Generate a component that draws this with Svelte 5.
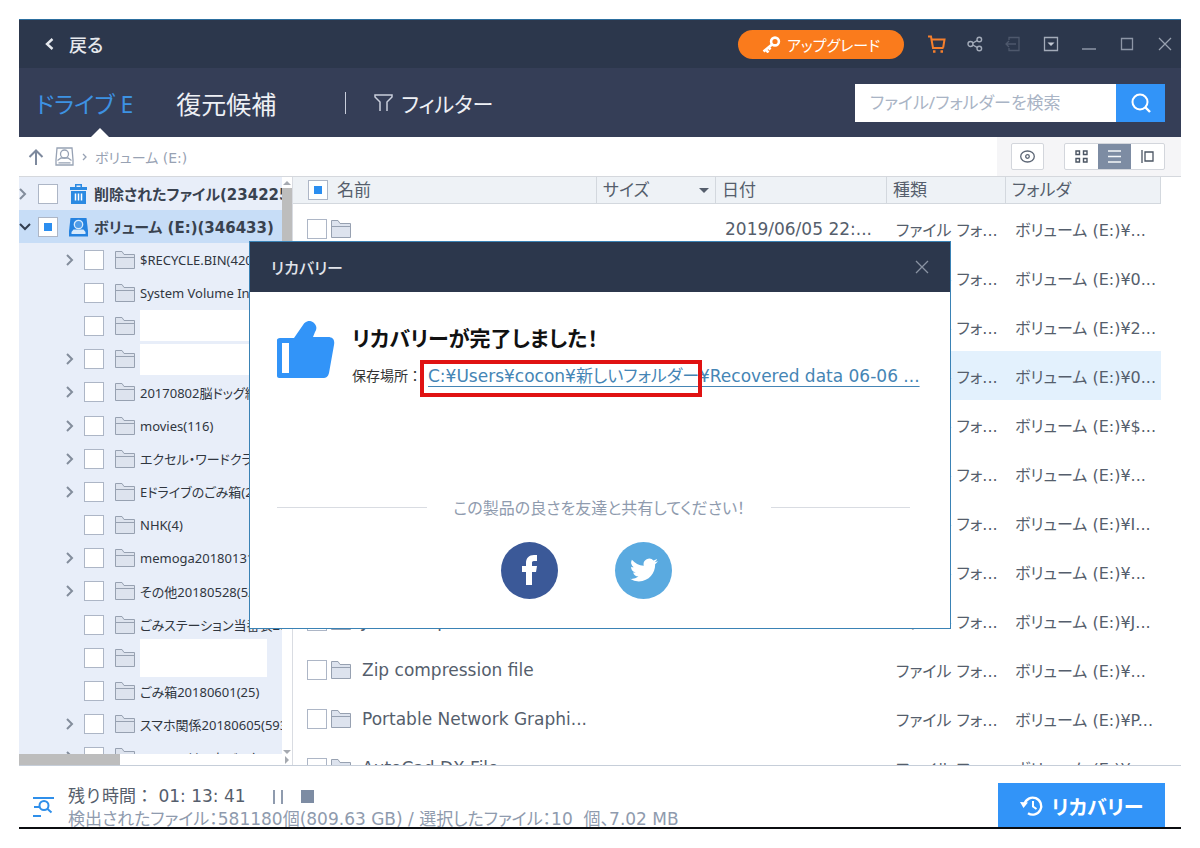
<script>
  const tree = [
    { name: "$RECYCLE.BIN(4206)", open: true },
    { name: "System Volume Information", open: false },
    { name: "", open: false, blank: "wide" },
    { name: "", open: true, blank: "wide" },
    { name: "20170802脳ドッグ結果(12)", open: true },
    { name: "movies(116)", open: true },
    { name: "エクセル・ワードクラシック", open: true },
    { name: "Eドライブのごみ箱(2018)", open: true },
    { name: "NHK(4)", open: false },
    { name: "memoga20180131(8)", open: true },
    { name: "その他20180528(520)", open: true },
    { name: "ごみステーション当番表2018", open: false },
    { name: "", open: false, blank: "tall" },
    { name: "ごみ箱20180601(25)", open: false },
    { name: "スマホ関係20180605(593)", open: true },
    { name: "Hatena はてなバックアップ", open: true },
  ];

  const rows = [
    { name: "", date: "2019/06/05 22:...", folder: "..." },
    { name: "", folder: "0..." },
    { name: "", folder: "2..." },
    { name: "", folder: "0...", active: true },
    { name: "", folder: "$..." },
    { name: "", folder: "..." },
    { name: "", folder: "I..." },
    { name: "", folder: "..." },
    { name: "JPEG Graphics", folder: "J..." },
    { name: "Zip compression file", folder: "..." },
    { name: "Portable Network Graphi...", folder: "P..." },
    { name: "AutoCad DX File", folder: "..." },
  ];

  let keyword = $state("");
  let showDialog = $state(true);
  let volumePartial = $state(true);
  let listPartial = $state(true);

  const closeDialog = () => {
    showDialog = false;
  };
</script>

{#snippet folderIcon()}
  <svg class="folder" width="20" height="20" viewBox="0 0 20 20" fill="#dde3ee" stroke="#97a1b1">
    <path d="M.5 18.500V1.500h6.500l2 3h10.500v14z" />
    <path d="M.5 7.500h19" />
  </svg>
{/snippet}

{#snippet chevron()}
  <svg width="8" height="12" viewBox="0 0 8 12" fill="none" stroke="#838d9c" stroke-width="2">
    <path d="M1 1l5 5-5 5" />
  </svg>
{/snippet}

<div class="window">
  <header class="titlebar">
    <button class="back">
      <svg width="9" height="12" viewBox="0 0 9 12" fill="none" stroke="#e6e9ee" stroke-width="2.4">
        <path d="M7.500 1L2 6l5.500 5" />
      </svg>
      戻る
    </button>
    <div class="tools">
      <button class="upgrade">
        <svg width="19" height="17" viewBox="0 0 19 17" fill="none" stroke="#fff" stroke-width="2.600">
          <circle cx="13" cy="5.500" r="3.900" />
          <path d="M10.300 8.300L1.500 15.500M3.500 13.500l3 3M6.500 11.500l2 2" />
        </svg>
        アップグレード
      </button>
      <button class="tool" aria-label="購入">
        <svg width="18" height="18" viewBox="0 0 18 18" fill="none" stroke="#f57f2c" stroke-width="2">
          <path d="M0 1.500h3l2 11.500h10.500M4 4.500h12.500l-1.300 8" />
          <path d="M5 16.500h2.500M12.500 16.500H15" stroke-width="2.400" />
        </svg>
      </button>
      <button class="tool" aria-label="共有">
        <svg width="16" height="16" viewBox="0 0 16 16" fill="none" stroke="#a3abb9" stroke-width="1.400">
          <circle cx="3.500" cy="8" r="2.500" />
          <circle cx="12.300" cy="3.500" r="2.300" />
          <circle cx="12.300" cy="12.500" r="2.300" />
          <path d="M5.800 7l4.300-2.300M5.800 9l4.300 2.300" />
        </svg>
      </button>
      <button class="tool" aria-label="ログアウト">
        <svg width="16" height="16" viewBox="0 0 16 16" fill="none" stroke="#4e586c" stroke-width="1.300">
          <path d="M4 4V1.500h10v13H4V12M11 8H1M4 5L1 8l3 3" />
        </svg>
      </button>
      <button class="tool" aria-label="メニュー">
        <svg width="16" height="16" viewBox="0 0 16 16" fill="none" stroke="#a3abb9" stroke-width="1.300">
          <path d="M1.500 1.500h13v13h-13z" />
          <path d="M4.500 6.500h7L8 10z" fill="#c3c9d3" stroke="none" />
        </svg>
      </button>
      <button class="tool" aria-label="最小化">
        <svg width="14" height="14" viewBox="0 0 14 14" stroke="#8d96a6" stroke-width="1.500">
          <path d="M0 12h14" />
        </svg>
      </button>
      <button class="tool" aria-label="最大化">
        <svg width="14" height="14" viewBox="0 0 14 14" fill="none" stroke="#8d96a6" stroke-width="1.300">
          <path d="M1.500 1.500h11v11h-11z" />
        </svg>
      </button>
      <button class="tool" aria-label="閉じる">
        <svg width="14" height="14" viewBox="0 0 14 14" stroke="#98a1af" stroke-width="1.300">
          <path d="M1 1l12 12M13 1L1 13" />
        </svg>
      </button>
    </div>
  </header>

  <nav class="navbar">
    <button class="tab active">ドライブ E</button>
    <button class="tab">復元候補</button>
    <span class="divider"></span>
    <button class="tab filter">
      <svg width="19" height="18" viewBox="0 0 19 18" fill="none" stroke="#c9cedb" stroke-width="1.500">
        <path d="M6 17V8L1 3V1h17v2l-5 5v9" />
      </svg>
      フィルター
    </button>
    <form class="search" onsubmit={(e) => e.preventDefault()}>
      <input type="text" aria-label="検索" placeholder="ファイル/フォルダーを検索" bind:value={keyword} />
      <button aria-label="検索する">
        <svg width="22" height="22" viewBox="0 0 22 22" fill="none" stroke="#fff" stroke-width="2">
          <circle cx="10" cy="10" r="7.500" />
          <path d="M15.500 15.500l4.500 4.500" stroke-width="2.400" />
        </svg>
      </button>
    </form>
  </nav>

  <div class="pathbar">
    <div class="crumbs">
      <button aria-label="上へ">
        <svg width="16" height="16" viewBox="0 0 16 16" fill="none" stroke="#7d899d" stroke-width="2">
          <path d="M8 16V1.500M1.500 8L8 1.500 14.500 8" />
        </svg>
      </button>
      <svg class="drive" width="19" height="19" viewBox="0 0 19 19" fill="none" stroke="#97a2b4" stroke-width="1.300">
        <path d="M2 1h15l1 12v5H1v-5z" />
        <circle cx="9.500" cy="7" r="4" />
        <path d="M2.500 13.500L6 11h7l3.500 2.500M3.500 15.800h12" />
      </svg>
      <svg width="6" height="8" viewBox="0 0 6 8" fill="none" stroke="#97a2b4" stroke-width="1.300">
        <path d="M1 1l3 3-3 3" />
      </svg>
      <a href="#volume">ボリューム (E:)</a>
    </div>
    <div class="views">
      <button class="preview" aria-label="プレビュー">
        <svg width="15" height="13" viewBox="0 0 15 13" fill="none" stroke="#5c6675" stroke-width="1.300">
          <ellipse cx="7.500" cy="6.500" rx="6.800" ry="5.500" />
          <circle cx="7.500" cy="6.500" r="1.800" />
        </svg>
      </button>
      <div class="group">
        <button aria-label="アイコン表示">
          <svg width="13" height="13" viewBox="0 0 13 13" fill="none" stroke="#4b5563" stroke-width="1.400">
            <path d="M1 1h3.500v3.500H1zM8.500 1H12v3.500H8.500zM1 8.500h3.500V12H1zM8.500 8.500H12V12H8.500z" />
          </svg>
        </button>
        <button class="on" aria-label="詳細表示">
          <svg width="13" height="13" viewBox="0 0 13 13" stroke="#f4f6f9" stroke-width="1.300">
            <path d="M0 1h13M0 6.500h13M0 12h13" />
          </svg>
        </button>
        <button aria-label="プレビュー表示">
          <svg width="13" height="13" viewBox="0 0 13 13" fill="none" stroke="#4b5563" stroke-width="1.300">
            <path d="M1 0v13M4 2h8v9H4z" />
          </svg>
        </button>
      </div>
    </div>
  </div>

  <main class="panes">
    <aside class="sidebar">
      <div class="scroller">
        <div class="content">
          <label class="root">
            <span class="toggle">{@render chevron()}</span>
            <input type="checkbox" />
            <svg class="icon" width="19" height="20" viewBox="0 0 19 20" fill="#2b8ae2">
              <path d="M1 3h5V0h7v3h5v3H1zM2 7h15v13H2z" />
              <path d="M6.500 9.500v7M9.500 9.500v7M12.500 9.500v7" stroke="#fff" stroke-width="1.500" />
              <path d="M7.500 1.500h4V3h-4z" fill="#e8eefa" />
            </svg>
            <span class="name">削除されたファイル(2342258)</span>
          </label>
          <label class="root selected">
            <span class="toggle">
              <svg width="12" height="8" viewBox="0 0 12 8" fill="none" stroke="#333e50" stroke-width="2">
                <path d="M1 1l5 5 5-5" />
              </svg>
            </span>
            <input type="checkbox" bind:indeterminate={volumePartial} />
            <svg class="icon" width="19" height="20" viewBox="0 0 19 20" fill="#2683e0">
              <path d="M1.500 1h16l1.500 13v5.500H0V14z" />
              <circle cx="9.500" cy="7.500" r="4.200" fill="#4f9ce8" stroke="#d8eafc" stroke-width="1.300" />
              <path d="M2.500 15l2-2.500h10l2 2.500v2h-14z" fill="#d8eafc" />
            </svg>
            <span class="name">ボリューム (E:)(346433)</span>
          </label>
          <ul>
            {#each tree as item}
              <li>
                <label>
                  <span class="toggle">
                    {#if item.open}{@render chevron()}{/if}
                  </span>
                  <input type="checkbox" aria-label={item.name || "フォルダ"} />
                  {@render folderIcon()}
                  {#if item.blank}
                    <span class="blank {item.blank}"></span>
                  {:else}
                    <span class="name">{item.name}</span>
                  {/if}
                </label>
              </li>
            {/each}
          </ul>
        </div>
        <div class="vbar">
          <span class="arrow up"></span>
          <span class="thumb"></span>
          <span class="arrow down"></span>
        </div>
      </div>
      <div class="hbar">
        <span class="thumb"></span>
        <span class="arrow right"></span>
      </div>
    </aside>

    <section class="files">
      <table>
        <colgroup>
          <col />
          <col class="size" />
          <col class="date" />
          <col class="type" />
          <col class="path" />
        </colgroup>
        <thead>
          <tr>
            <th>
              <label class="cell">
                <input type="checkbox" bind:indeterminate={listPartial} />
                名前
              </label>
            </th>
            <th>
              <div class="sort">サイズ <span class="caret"></span></div>
            </th>
            <th>日付</th>
            <th>種類</th>
            <th>フォルダ</th>
          </tr>
        </thead>
        <tbody>
          {#each rows as row}
            <tr class:active={row.active}>
              <td>
                <label class="cell">
                  <input type="checkbox" aria-label={row.name || "フォルダ"} />
                  {@render folderIcon()}
                  <span>{row.name}</span>
                </label>
              </td>
              <td></td>
              <td>{row.date ?? ""}</td>
              <td class="kind">ファイル フォ...</td>
              <td class="kind">ボリューム (E:)¥{row.folder}</td>
            </tr>
          {/each}
        </tbody>
      </table>
    </section>
  </main>

  <footer class="statusbar">
    <svg class="scan" width="22" height="20" viewBox="0 0 22 20" fill="none" stroke="#2f8fea" stroke-width="2">
      <path d="M0 1h21M1 10h5M0 19h8" />
      <circle cx="11" cy="8.500" r="4.500" />
      <path d="M14 11.500l4.500 4" />
    </svg>
    <div class="status">
      <div class="time">
        <span>残り時間： 01: 13: 41</span>
        <button class="pause" aria-label="一時停止"></button>
        <button class="stop" aria-label="停止"></button>
      </div>
      <div class="found">検出されたファイル：581180個(809.63 GB) / 選択したファイル：10&nbsp; 個、7.02 MB</div>
    </div>
    <button class="recover">
      <svg width="24" height="22" viewBox="0 0 24 22" fill="none" stroke="#fff" stroke-width="2.400">
        <path d="M4.500 9A8.500 8.500 0 1 1 8 18.200" />
        <path d="M13 6v5.500l3.500 2.500" stroke-width="2" />
        <path d="M0 7l8 .5-4.500 5.500z" fill="#fff" stroke="none" />
      </svg>
      リカバリー
    </button>
  </footer>

  {#if showDialog}
    <div class="overlay">
      <div class="dialog" role="dialog" aria-labelledby="dialog-title">
        <div class="dialog-head">
          <span id="dialog-title">リカバリー</span>
          <button aria-label="閉じる" onclick={closeDialog}>
            <svg width="14" height="14" viewBox="0 0 14 14" stroke="#8a93a3" stroke-width="1.300">
              <path d="M1 1l12 12M13 1L1 13" />
            </svg>
          </button>
        </div>
        <div class="dialog-body">
          <div class="result">
            <svg width="58" height="58" viewBox="0 0 58 58">
              <path
                d="M3 17h14L26 4c3-5 8-5 11-2 3 3 3 6 1 9l-2 5h15c5 0 7 3 6 8l-5 28c-1 4-3 5-6 5H2c-1 0-2-1-2-2V19c0-1 1-2 3-2z"
                fill="#3294f8"
              />
              <path d="M5 22h7v30H5z" fill="#fff" />
            </svg>
            <div class="message">
              <h2>リカバリーが完了しました！</h2>
              <p>
                <span class="label">保存場所：</span>
                <a href="#saved"><span class="marked">C:¥Users¥cocon¥新しいフォルダー</span>¥Recovered data 06-06 ...</a>
              </p>
            </div>
          </div>
          <div class="share-title"><span>この製品の良さを友達と共有してください！</span></div>
          <div class="share">
            <button class="facebook" aria-label="Facebook">
              <svg width="16" height="30" viewBox="0 0 16 30" fill="#fff">
                <path d="M4 30V17H0v-6h4V8c0-5 3-8 8-8h3v6h-3c-2 0-2 1-2 2v3h5l-1 6h-4v13z" />
              </svg>
            </button>
            <button class="twitter" aria-label="Twitter">
              <svg width="28" height="24" viewBox="0 2 24 20" fill="#fff">
                <path
                  d="M23.950 4.570a10 10 0 0 1-2.820.780 4.960 4.960 0 0 0 2.160-2.720c-.950.550-2 .950-3.130 1.180a4.920 4.920 0 0 0-8.380 4.480C7.690 8.100 4.070 6.130 1.640 3.160a4.930 4.930 0 0 0 1.520 6.570 4.900 4.900 0 0 1-2.230-.610v.060a4.920 4.920 0 0 0 3.950 4.830 5 5 0 0 1-2.210.080 4.940 4.940 0 0 0 4.600 3.420A9.870 9.870 0 0 1 0 19.540a14 14 0 0 0 7.550 2.210c9.050 0 14-7.500 14-13.980 0-.210 0-.420-.020-.630a10 10 0 0 0 2.460-2.550z"
                />
              </svg>
            </button>
          </div>
        </div>
      </div>
    </div>
  {/if}
</div>

<style>
  :global(body) {
    margin: 0;
    background: #fff;
  }

  .window {
    position: relative;
    box-sizing: border-box;
    display: flex;
    flex-direction: column;
    height: calc(100vh - 38px);
    margin: 19px;
    border-top: 1px solid #2d6f9f;
    border-bottom: 2px solid #0b0d10;
    font-family: "Noto Sans", "Noto Sans CJK JP", sans-serif;
    font-feature-settings: "palt";
    font-size: 17px;
    color: #555e6c;
    overflow: hidden;
  }

  .crumbs a,
  .root,
  td,
  p a,
  .status {
    font-family: "DejaVu Sans", "Noto Sans CJK JP", sans-serif;
  }

  button,
  input {
    font: inherit;
    font-feature-settings: inherit;
    color: inherit;
    margin: 0;
    padding: 0;
    border: 0;
    background: none;
  }

  button {
    display: flex;
    align-items: center;
    justify-content: center;
    cursor: pointer;
  }

  svg {
    flex: none;
    display: block;
  }

  input[type="checkbox"] {
    flex: none;
    appearance: none;
    box-sizing: border-box;
    display: grid;
    place-items: center;
    width: 20px;
    height: 20px;
    border: 1px solid #adb6c6;
    background: #fff;
  }

  input[type="checkbox"]:indeterminate::before {
    content: "";
    width: 8px;
    height: 8px;
    background: #2b8ef0;
  }

  /* Title bar */
  .titlebar {
    flex: none;
    display: flex;
    align-items: center;
    justify-content: space-between;
    height: 48px;
    padding: 0 8px 0 26px;
    background: #2c374c;
  }

  .back {
    gap: 15px;
    font-size: 18px;
    font-weight: 500;
    color: #e6e9ee;
  }

  .tools {
    display: flex;
    align-items: center;
  }

  .upgrade {
    gap: 6px;
    width: 166px;
    height: 29px;
    margin-right: 14px;
    border-radius: 15px;
    background: #fa7b1c;
    font-size: 15px;
    color: #fff;
  }

  .tool {
    width: 38px;
    height: 38px;
  }

  .tool:last-child {
    width: 16px;
    margin-left: 11px;
  }

  /* Navigation */
  .navbar {
    flex: none;
    display: flex;
    align-items: center;
    height: 69px;
    padding: 0 16px 0 17px;
    background: #353e57;
    color: #eef0f5;
  }

  .tab {
    position: relative;
    height: 69px;
    font-size: 25px;
    white-space: nowrap;
  }

  .tab.active {
    margin-right: 43px;
    font-size: 23px;
    color: #3d92e3;
  }

  .tab.active::after {
    content: "";
    position: absolute;
    bottom: 0;
    left: 66%;
    border: 9px solid transparent;
    border-top: 0;
    border-bottom-color: #fff;
    transform: translateX(-50%);
  }

  .divider {
    width: 1px;
    height: 22px;
    margin: 0 28px 0 69px;
    background: #c9cedb;
  }

  .filter {
    gap: 8px;
    font-size: 21px;
  }

  .search {
    display: flex;
    width: 310px;
    height: 38px;
    margin-left: auto;
  }

  .search input {
    flex: 1;
    min-width: 0;
    padding: 0 15px;
    background: #fff;
    font-size: 17px;
    color: #555e6c;
  }

  .search input::placeholder {
    color: #a9b4c5;
    opacity: 1;
  }

  .search button {
    width: 49px;
    background: #3294f8;
  }

  /* Path bar */
  .pathbar {
    flex: none;
    display: flex;
    justify-content: space-between;
    height: 39px;
    border-bottom: 1px solid #d5d8dd;
  }

  .crumbs {
    display: flex;
    align-items: center;
    padding-left: 9px;
  }

  .crumbs .drive {
    margin: 0 8px 0 11px;
  }

  .crumbs a {
    margin-left: 7px;
    font-size: 14px;
    color: #98a2b3;
    text-decoration: none;
  }

  .views {
    display: flex;
    align-items: center;
    gap: 20px;
    padding: 0 16px 0 14px;
    background: #f5f5f7;
  }

  .preview,
  .group {
    box-sizing: border-box;
    height: 27px;
    border: 1px solid #d3d6dc;
    border-radius: 2px;
    background: #fff;
  }

  .preview {
    width: 33px;
  }

  .group {
    display: flex;
  }

  .group button {
    width: 33px;
  }

  .group .on {
    background: #7d8ca3;
  }

  /* Panes */
  .panes {
    flex: 1;
    display: flex;
    min-height: 0;
    border-bottom: 1px solid #c6ced9;
  }

  .sidebar {
    flex: none;
    display: flex;
    flex-direction: column;
    width: 273px;
    border-right: 1px solid #d9dce2;
  }

  .scroller {
    flex: 1;
    display: flex;
    min-height: 0;
  }

  .content {
    flex: 1;
    display: flex;
    flex-direction: column;
    min-width: 0;
    overflow: hidden;
    background: #e8eef9;
  }

  .content label {
    display: flex;
    align-items: center;
    height: 100%;
    white-space: nowrap;
  }

  .toggle {
    flex: none;
    display: flex;
    width: 18px;
  }

  .content .root {
    flex: none;
    height: 33px;
    font-size: 15px;
    font-weight: 700;
    color: #39424f;
  }

  .root .toggle {
    width: 19px;
  }

  .root .icon {
    margin: 0 6px 0 11px;
  }

  .content .selected {
    background: #c7ddf7;
  }

  ul {
    flex: 1;
    display: flex;
    flex-direction: column;
    margin: 0 0 -20px;
    padding: 0 0 0 47px;
    list-style: none;
    font-size: 13px;
    color: #30363f;
  }

  li {
    flex: 1;
    min-height: 0;
  }

  li .folder {
    margin: 0 5px 0 11px;
  }

  .blank {
    width: 127px;
    height: 31px;
    background: #fff;
  }

  .blank.tall {
    height: 38px;
  }

  .vbar {
    display: flex;
    flex-direction: column;
    align-items: center;
    width: 10px;
    background: #fff;
  }

  .vbar .thumb {
    width: 10px;
    height: 200px;
    background: #bdbdbd;
  }

  .arrow {
    border: 4px solid transparent;
  }

  .arrow.up {
    margin: 0 0 3px;
    border-bottom-color: #a5a9b0;
  }

  .arrow.down {
    margin-top: auto;
    border-bottom: 0;
    border-top-color: #a5a9b0;
  }

  .arrow.right {
    border-right: 0;
    border-left-color: #a5a9b0;
  }

  .hbar {
    flex: none;
    display: flex;
    align-items: center;
    justify-content: space-between;
    height: 11px;
    padding-right: 3px;
    background: #fff;
  }

  .hbar .thumb {
    width: 101px;
    height: 11px;
    background: #bdbdbd;
  }

  /* File table */
  .files {
    flex: 1;
    min-width: 0;
    padding-right: 20px;
    overflow: hidden;
  }

  table {
    width: 100%;
    table-layout: fixed;
    border-collapse: separate;
    border-spacing: 0;
  }

  .size,
  .type {
    width: 119px;
  }

  .date {
    width: 171px;
  }

  .path {
    width: 155px;
  }

  th {
    box-sizing: border-box;
    height: 27px;
    padding: 0 6px;
    border-right: 1px solid #d3d8de;
    border-bottom: 1px solid #d3d8de;
    background: #eef2f6;
    font-weight: 400;
    font-size: 17px;
    line-height: 24px;
    text-align: left;
  }

  th:first-child {
    padding-left: 15px;
  }

  .cell {
    display: flex;
    align-items: center;
    gap: 9px;
  }

  .sort {
    display: flex;
    align-items: center;
    justify-content: space-between;
  }

  .caret {
    border: 5px solid transparent;
    border-top-color: #555e6c;
    border-bottom: 0;
  }

  td {
    box-sizing: border-box;
    height: 49px;
    padding: 0 0 0 9px;
    white-space: nowrap;
    overflow: hidden;
  }

  td:first-child {
    padding-left: 14px;
  }

  .kind {
    font-size: 16px;
  }

  td .cell {
    gap: 4px;
  }

  td .cell span {
    margin-left: 7px;
  }

  .active td {
    background: #e3f1fd;
  }

  /* Status bar */
  .statusbar {
    flex: none;
    display: flex;
    height: 61px;
    padding: 0 16px 0 14px;
    overflow: hidden;
  }

  .scan {
    margin: 31px 13px 0 0;
  }

  .status {
    flex: 1;
    min-width: 0;
    padding-top: 19px;
    line-height: 23px;
    white-space: nowrap;
  }

  .time {
    display: flex;
    align-items: center;
    font-feature-settings: normal;
  }

  .pause {
    box-sizing: border-box;
    width: 10px;
    height: 14px;
    margin: 0 18px 0 27px;
    border: solid #8f9bae;
    border-width: 0 2px;
  }

  .stop {
    width: 13px;
    height: 13px;
    background: #7d8ca3;
  }

  .found {
    color: #8f9bae;
  }

  .recover {
    gap: 8px;
    width: 167px;
    height: 46px;
    margin-top: 17px;
    background: #3294f8;
    font-size: 20px;
    font-weight: 700;
    color: #fff;
  }

  /* Dialog */
  .overlay {
    position: absolute;
    inset: 22px 0 0;
    display: flex;
    align-items: center;
    justify-content: center;
  }

  .dialog {
    box-sizing: border-box;
    width: 702px;
    max-width: 100%;
    border: 1px solid #3a82b5;
    background: #fff;
  }

  .dialog-head {
    display: flex;
    align-items: center;
    justify-content: space-between;
    height: 50px;
    padding: 0 21px;
    background: #2c374c;
    font-size: 16px;
    font-weight: 500;
    color: #e1e4ea;
  }

  .dialog-body {
    padding: 29px 40px 29px 27px;
  }

  .result {
    display: flex;
    gap: 17px;
  }

  h2 {
    margin: 4px 0 12px;
    font-size: 21px;
    line-height: 26px;
    color: #111;
  }

  p {
    display: flex;
    align-items: center;
    margin: 0;
    font-size: 14px;
    line-height: 26px;
    color: #333;
    white-space: nowrap;
  }

  .label {
    font-feature-settings: normal;
  }

  p a {
    margin-left: 6px;
    font-size: 17px;
    color: #4585b5;
    text-underline-offset: 4px;
  }

  .marked {
    position: relative;
  }

  .marked::after {
    content: "";
    position: absolute;
    inset: -6px -3px -11px -8px;
    border: 4px solid #e01212;
  }

  .share-title {
    display: flex;
    align-items: center;
    gap: 26px;
    margin-top: 106px;
    font-size: 16px;
    line-height: 26px;
    color: #8f9bae;
    white-space: nowrap;
  }

  .share-title::before,
  .share-title::after {
    content: "";
    flex: 13;
    height: 1px;
    background: #d9dce2;
  }

  .share-title::after {
    flex: 12;
  }

  .share {
    display: flex;
    justify-content: center;
    gap: 57px;
    margin-top: 21px;
    padding-right: 14px;
  }

  .share button {
    width: 57px;
    height: 57px;
    border-radius: 50%;
  }

  .facebook {
    background: #3b5998;
  }

  .twitter {
    background: #5aaae0;
  }
</style>
